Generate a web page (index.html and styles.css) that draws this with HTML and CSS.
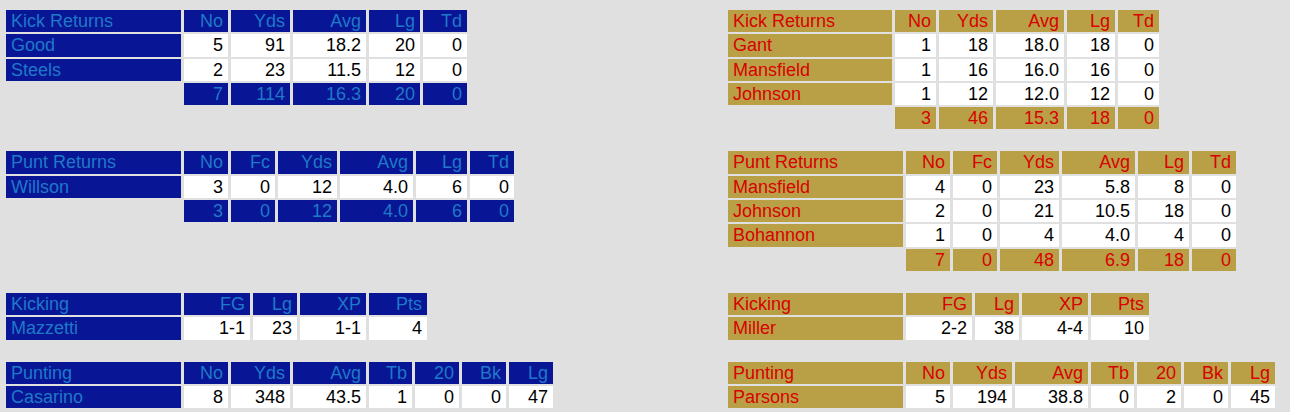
FILE: index.html
```html
<!DOCTYPE html>
<html>
<head>
<meta charset="utf-8">
<link rel="stylesheet" href="styles.css">
</head>
<body>
<div class="page">

  <table class="stats blue t467">
    <colgroup><col class="w175"><col class="w44"><col class="w59"><col class="w73"><col class="w51"><col class="w44"></colgroup>
    <tr><td class="lbl">Kick Returns</td><td class="lbl r">No</td><td class="lbl r">Yds</td><td class="lbl r">Avg</td><td class="lbl r">Lg</td><td class="lbl r">Td</td></tr>
    <tr><td class="lbl">Good</td><td class="v">5</td><td class="v">91</td><td class="v">18.2</td><td class="v">20</td><td class="v">0</td></tr>
    <tr><td class="lbl">Steels</td><td class="v">2</td><td class="v">23</td><td class="v">11.5</td><td class="v">12</td><td class="v">0</td></tr>
    <tr><td class="empty"></td><td class="lbl r">7</td><td class="lbl r">114</td><td class="lbl r">16.3</td><td class="lbl r">20</td><td class="lbl r">0</td></tr>
  </table>

  <table class="stats gold t437">
    <colgroup><col class="w164"><col class="w41"><col class="w54"><col class="w68"><col class="w48"><col class="w41"></colgroup>
    <tr><td class="lbl">Kick Returns</td><td class="lbl r">No</td><td class="lbl r">Yds</td><td class="lbl r">Avg</td><td class="lbl r">Lg</td><td class="lbl r">Td</td></tr>
    <tr><td class="lbl">Gant</td><td class="v">1</td><td class="v">18</td><td class="v">18.0</td><td class="v">18</td><td class="v">0</td></tr>
    <tr><td class="lbl">Mansfield</td><td class="v">1</td><td class="v">16</td><td class="v">16.0</td><td class="v">16</td><td class="v">0</td></tr>
    <tr><td class="lbl">Johnson</td><td class="v">1</td><td class="v">12</td><td class="v">12.0</td><td class="v">12</td><td class="v">0</td></tr>
    <tr><td class="empty"></td><td class="lbl r">3</td><td class="lbl r">46</td><td class="lbl r">15.3</td><td class="lbl r">18</td><td class="lbl r">0</td></tr>
  </table>

  <table class="stats blue t514">
    <colgroup><col class="w175"><col class="w44"><col class="w44"><col class="w59"><col class="w73"><col class="w51"><col class="w44"></colgroup>
    <tr><td class="lbl">Punt Returns</td><td class="lbl r">No</td><td class="lbl r">Fc</td><td class="lbl r">Yds</td><td class="lbl r">Avg</td><td class="lbl r">Lg</td><td class="lbl r">Td</td></tr>
    <tr><td class="lbl">Willson</td><td class="v">3</td><td class="v">0</td><td class="v">12</td><td class="v">4.0</td><td class="v">6</td><td class="v">0</td></tr>
    <tr><td class="empty"></td><td class="lbl r">3</td><td class="lbl r">0</td><td class="lbl r">12</td><td class="lbl r">4.0</td><td class="lbl r">6</td><td class="lbl r">0</td></tr>
  </table>

  <table class="stats gold t514">
    <colgroup><col class="w175"><col class="w44"><col class="w44"><col class="w59"><col class="w73"><col class="w51"><col class="w44"></colgroup>
    <tr><td class="lbl">Punt Returns</td><td class="lbl r">No</td><td class="lbl r">Fc</td><td class="lbl r">Yds</td><td class="lbl r">Avg</td><td class="lbl r">Lg</td><td class="lbl r">Td</td></tr>
    <tr><td class="lbl">Mansfield</td><td class="v">4</td><td class="v">0</td><td class="v">23</td><td class="v">5.8</td><td class="v">8</td><td class="v">0</td></tr>
    <tr><td class="lbl">Johnson</td><td class="v">2</td><td class="v">0</td><td class="v">21</td><td class="v">10.5</td><td class="v">18</td><td class="v">0</td></tr>
    <tr><td class="lbl">Bohannon</td><td class="v">1</td><td class="v">0</td><td class="v">4</td><td class="v">4.0</td><td class="v">4</td><td class="v">0</td></tr>
    <tr><td class="empty"></td><td class="lbl r">7</td><td class="lbl r">0</td><td class="lbl r">48</td><td class="lbl r">6.9</td><td class="lbl r">18</td><td class="lbl r">0</td></tr>
  </table>

  <table class="stats blue t427">
    <colgroup><col class="w175"><col class="w66"><col class="w44"><col class="w66"><col class="w58"></colgroup>
    <tr><td class="lbl">Kicking</td><td class="lbl r">FG</td><td class="lbl r">Lg</td><td class="lbl r">XP</td><td class="lbl r">Pts</td></tr>
    <tr><td class="lbl">Mazzetti</td><td class="v">1-1</td><td class="v">23</td><td class="v">1-1</td><td class="v">4</td></tr>
  </table>

  <table class="stats gold t427">
    <colgroup><col class="w175"><col class="w66"><col class="w44"><col class="w66"><col class="w58"></colgroup>
    <tr><td class="lbl">Kicking</td><td class="lbl r">FG</td><td class="lbl r">Lg</td><td class="lbl r">XP</td><td class="lbl r">Pts</td></tr>
    <tr><td class="lbl">Miller</td><td class="v">2-2</td><td class="v">38</td><td class="v">4-4</td><td class="v">10</td></tr>
  </table>

  <table class="stats blue t553">
    <colgroup><col class="w175"><col class="w44"><col class="w59"><col class="w73"><col class="w43"><col class="w44"><col class="w44"><col class="w44"></colgroup>
    <tr><td class="lbl">Punting</td><td class="lbl r">No</td><td class="lbl r">Yds</td><td class="lbl r">Avg</td><td class="lbl r">Tb</td><td class="lbl r">20</td><td class="lbl r">Bk</td><td class="lbl r">Lg</td></tr>
    <tr><td class="lbl">Casarino</td><td class="v">8</td><td class="v">348</td><td class="v">43.5</td><td class="v">1</td><td class="v">0</td><td class="v">0</td><td class="v">47</td></tr>
  </table>

  <table class="stats gold t553">
    <colgroup><col class="w175"><col class="w44"><col class="w59"><col class="w73"><col class="w43"><col class="w44"><col class="w44"><col class="w44"></colgroup>
    <tr><td class="lbl">Punting</td><td class="lbl r">No</td><td class="lbl r">Yds</td><td class="lbl r">Avg</td><td class="lbl r">Tb</td><td class="lbl r">20</td><td class="lbl r">Bk</td><td class="lbl r">Lg</td></tr>
    <tr><td class="lbl">Parsons</td><td class="v">5</td><td class="v">194</td><td class="v">38.8</td><td class="v">0</td><td class="v">2</td><td class="v">0</td><td class="v">45</td></tr>
  </table>

</div>
</body>
</html>
```

FILE: styles.css
```css
html, body {
  margin: 0;
  padding: 0;
  background: #e0e0e0;
}

.page {
  display: grid;
  grid-template-columns: 722px auto;
  row-gap: 18px;
  align-items: start;
  padding: 8px 0 0 3px;
}

.stats {
  border-collapse: separate;
  border-spacing: 3px 2px;
  table-layout: fixed;
  font-family: "Liberation Sans", Arial, sans-serif;
  font-size: 18px;
}

.stats td {
  padding: 1px 5px;
  line-height: 20.3px;
  height: 20.3px;
  white-space: nowrap;
  overflow: hidden;
}

.stats td.r,
.stats td.v {
  text-align: right;
}

.stats td.v {
  background: #ffffff;
  color: #000000;
}

.stats td.empty {
  background: transparent;
}

.blue td.lbl {
  background: #081594;
  color: #1f79c9;
}

.gold td.lbl {
  background: #b9a046;
  color: #d80000;
}

.t467 { width: 467px; }
.t437 { width: 437px; }
.t514 { width: 514px; }
.t427 { width: 427px; }
.t553 { width: 553px; }

.w175 { width: 175px; }
.w164 { width: 164px; }
.w73 { width: 73px; }
.w68 { width: 68px; }
.w66 { width: 66px; }
.w59 { width: 59px; }
.w58 { width: 58px; }
.w54 { width: 54px; }
.w51 { width: 51px; }
.w48 { width: 48px; }
.w44 { width: 44px; }
.w43 { width: 43px; }
.w41 { width: 41px; }
```
